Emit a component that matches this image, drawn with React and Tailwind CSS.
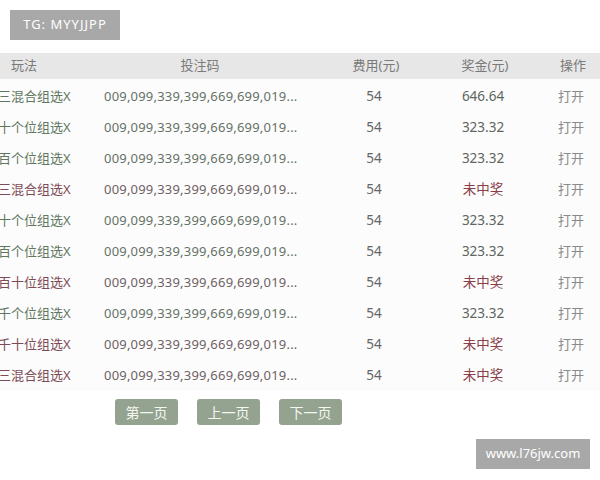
import React from 'react';

const rows = [
  { name: '三混合组选X', prize: '646.64', win: true },
  { name: '十个位组选X', prize: '323.32', win: true },
  { name: '百个位组选X', prize: '323.32', win: true },
  { name: '三混合组选X', prize: '未中奖', win: false },
  { name: '十个位组选X', prize: '323.32', win: true },
  { name: '百个位组选X', prize: '323.32', win: true },
  { name: '百十位组选X', prize: '未中奖', win: false },
  { name: '千个位组选X', prize: '323.32', win: true },
  { name: '千十位组选X', prize: '未中奖', win: false },
  { name: '三混合组选X', prize: '未中奖', win: false },
];

const font = { fontFamily: '"Noto Sans", "Noto Sans CJK SC", sans-serif' };

const App = () => {
  return (
    <div className="w-[600px] h-[480px] bg-white overflow-hidden text-[13px]" style={font}>
      {/* Watermark */}
      <div className="h-[53px] pt-[10px] pl-[10px]">
        <div className="w-[110px] h-[30px] bg-[#a8a8a8] text-white flex items-center justify-center text-[13px] tracking-[1px]">
          TG: MYYJJPP
        </div>
      </div>

      {/* Header */}
      <div className="flex h-[26px] items-center bg-[#e7e7e7] text-[#7a7a7a] w-[640px]">
        <div className="w-[100px] pl-[11px]">玩法</div>
        <div className="w-[200px] text-center">投注码</div>
        <div className="w-[152px] text-center">费用(元)</div>
        <div className="w-[66px] text-center">奖金(元)</div>
        <div className="w-[110px] text-center">操作</div>
      </div>

      {/* Rows */}
      <div className="w-[640px] bg-[#fcfcfc] pt-[2px]">
        {rows.map((r, i) => (
          <div key={i} className="flex h-[31px] items-center">
            <div className={`w-[100px] -ml-[2px] ${r.win ? 'text-[#5f7760]' : 'text-[#7d4b55]'}`}>
              {r.name}
            </div>
            <div className={`w-[200px] pl-[6px] tracking-[0.2px] ${r.win ? 'text-[#667266]' : 'text-[#6e6264]'}`}>
              009,099,339,399,669,699,019...
            </div>
            <div className="w-[152px] text-center text-[#666666] text-[13.5px]">54</div>
            <div className={`w-[66px] text-center whitespace-nowrap text-[13.5px] ${r.win ? 'text-[#5e665e]' : 'text-[#8a3f48]'}`}>
              {r.prize}
            </div>
            <div className="w-[110px] text-center text-[#8a8a8a]">打开</div>
          </div>
        ))}
      </div>

      {/* Pager */}
      <div className="flex gap-[19px] pl-[115px] pt-[8px]">
        {['第一页', '上一页', '下一页'].map((t) => (
          <button
            key={t}
            className="w-[63px] h-[26px] rounded-[3px] bg-[#93a38f] text-[#f4f6f2] text-[14px] flex items-center justify-center"
          >
            {t}
          </button>
        ))}
      </div>

      {/* Site mark */}
      <div className="flex justify-end pr-[10px] pt-[14px]">
        <div className="w-[114px] h-[30px] bg-[#a8a8a8] text-white flex items-center justify-center text-[13px]">
          www.l76jw.com
        </div>
      </div>
    </div>
  );
};

export default App;
